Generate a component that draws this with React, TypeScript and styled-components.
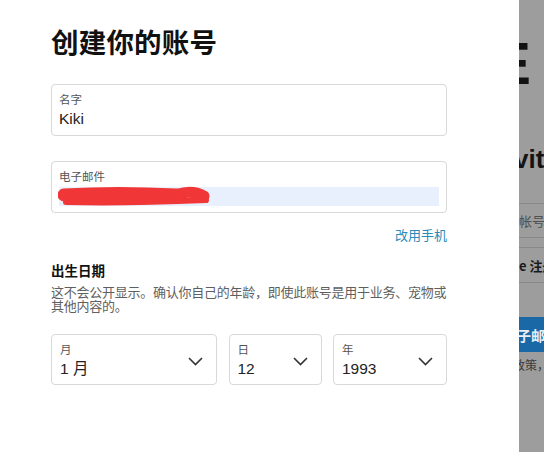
import React from "react";
import styled, { createGlobalStyle } from "styled-components";

const GlobalStyle = createGlobalStyle`
  html, body { margin: 0; padding: 0; background: #ffffff; }
  body { font-family: "Liberation Sans", "Noto Sans CJK SC", sans-serif; }
  * { box-sizing: border-box; }
`;

const Page = styled.div`
  display: flex;
  width: 544px;
  height: 452px;
  overflow: hidden;
`;

const Panel = styled.div`
  width: 519px;
  flex: none;
  background: #ffffff;
  padding: 22px 72px 0 51px;
  display: flex;
  flex-direction: column;
`;

const Title = styled.h1`
  margin: 0;
  font-family: "Noto Sans CJK SC", sans-serif;
  font-size: 27.5px;
  line-height: 38px;
  font-weight: 700;
  color: #111;
  letter-spacing: 0.2px;
`;

const Field = styled.div<{ $mt: number }>`
  margin-top: ${(p) => p.$mt}px;
  height: 52px;
  border: 1px solid #d8d8d8;
  border-radius: 4px;
  padding: 6px 7px 0 7px;
  display: flex;
  flex-direction: column;
`;

const Label = styled.div`
  font-family: "Noto Sans CJK SC", sans-serif;
  font-size: 11.5px;
  line-height: 16px;
  color: #555;
`;

const Value = styled.div`
  font-family: "Liberation Sans", "Noto Sans CJK SC", sans-serif;
  font-size: 15.5px;
  line-height: 24px;
  color: #222;
`;

const Autofill = styled.div`
  position: relative;
  margin-top: 3px;
  height: 19px;
  background: #e8f0fe;
`;

const Scribble = styled.svg`
  position: absolute;
  left: -1px;
  top: -5px;
`;

const LinkRow = styled.div`
  display: flex;
  justify-content: flex-end;
  margin-top: 12px;
`;

const Link = styled.a`
  font-family: "Noto Sans CJK SC", sans-serif;
  font-size: 13px;
  line-height: 20px;
  color: #2a8ab8;
  text-decoration: none;
`;

const SectionTitle = styled.div`
  margin-top: 15px;
  font-family: "Noto Sans CJK SC", sans-serif;
  font-size: 13.5px;
  line-height: 20px;
  font-weight: 700;
  color: #111;
`;

const Hint = styled.p`
  margin: 5px 0 0 0;
  font-family: "Noto Sans CJK SC", sans-serif;
  font-size: 13px;
  line-height: 13.5px;
  letter-spacing: -0.25px;
  color: #5f5f5f;
`;

const DateRow = styled.div`
  margin-top: 22px;
  display: flex;
  gap: 11.5px;
`;

const Select = styled.div<{ $w?: number }>`
  ${(p) => (p.$w ? `width: ${p.$w}px; flex: none;` : "flex: 1;")}
  height: 51px;
  border: 1px solid #d8d8d8;
  border-radius: 4px;
  padding: 6px 13px 0 8px;
  display: flex;
  align-items: center;
`;

const SelectText = styled.div`
  flex: 1;
  align-self: flex-start;
  display: flex;
  flex-direction: column;
`;

const ChevronIcon = styled.svg`
  margin-top: -2px;
  flex: none;
`;

const Chevron = () => (
  <ChevronIcon width="15" height="9" viewBox="0 0 15 9">
    <polyline points="1,1 7.5,7.5 14,1" fill="none" stroke="#333" strokeWidth="1.6" />
  </ChevronIcon>
);

/* background page behind the overlay */
const Backdrop = styled.div`
  flex: 1;
  background: #9d9d9d;
  overflow: hidden;
  display: flex;
  flex-direction: column;
  white-space: nowrap;
`;

const BigLetter = styled.div`
  margin: 34px 0 0 -28px;
  font-family: "Liberation Sans", sans-serif;
  font-weight: 900;
  font-size: 60px;
  line-height: 60px;
  color: #121212;
`;

const BigWord = styled.div`
  margin: 50px 0 0 -5px;
  font-family: "Liberation Sans", sans-serif;
  font-weight: 700;
  font-size: 26px;
  line-height: 30px;
  color: #141414;
`;

const Row = styled.div<{ $h: number; $bold?: boolean }>`
  height: ${(p) => p.$h}px;
  border-bottom: 1px solid #888;
  display: flex;
  align-items: center;
  font-family: "Noto Sans CJK SC", sans-serif;
  font-size: 13px;
  color: ${(p) => (p.$bold ? "#1a1a1a" : "#505050")};
  font-weight: ${(p) => (p.$bold ? 700 : 400)};
`;

const Rows = styled.div`
  margin-top: 29px;
  border-top: 1px solid #888;
  display: flex;
  flex-direction: column;
`;

const BlueButton = styled.div`
  margin-top: 34px;
  height: 35px;
  background: #1a68a6;
  color: #e8eef5;
  font-family: "Noto Sans CJK SC", sans-serif;
  font-weight: 700;
  font-size: 14px;
  display: flex;
  align-items: center;
  margin-left: -2px;
`;

const SmallNote = styled.div`
  margin: 4px 0 0 -6px;
  font-family: "Noto Sans CJK SC", sans-serif;
  font-size: 12px;
  color: #3a3a3a;
`;

export default function App() {
  return (
    <>
      <GlobalStyle />
      <Page>
        <Panel>
          <Title>创建你的账号</Title>
          <Field $mt={24}>
            <Label>名字</Label>
            <Value>Kiki</Value>
          </Field>
          <Field $mt={25}>
            <Label>电子邮件</Label>
            <Autofill>
              <Scribble width="160" height="28" viewBox="0 0 160 28">
                <path d="M6 13 C40 11, 80 11, 118 13" stroke="#f03636" strokeWidth="13" fill="none" strokeLinecap="round" />
                <path d="M110 15 C125 10, 135 8, 146 14" stroke="#f03636" strokeWidth="11" fill="none" strokeLinecap="round" />
                <path d="M8 20 C50 21, 100 20, 148 18" stroke="#f03636" strokeWidth="6" fill="none" strokeLinecap="round" />
              </Scribble>
            </Autofill>
          </Field>
          <LinkRow>
            <Link href="#">改用手机</Link>
          </LinkRow>
          <SectionTitle>出生日期</SectionTitle>
          <Hint>这不会公开显示。确认你自己的年龄，即使此账号是用于业务、宠物或其他内容的。</Hint>
          <DateRow>
            <Select $w={166}>
              <SelectText>
                <Label>月</Label>
                <Value>1 月</Value>
              </SelectText>
              <Chevron />
            </Select>
            <Select $w={93}>
              <SelectText>
                <Label>日</Label>
                <Value>12</Value>
              </SelectText>
              <Chevron />
            </Select>
            <Select>
              <SelectText>
                <Label>年</Label>
                <Value>1993</Value>
              </SelectText>
              <Chevron />
            </Select>
          </DateRow>
        </Panel>
        <Backdrop>
          <BigLetter>E</BigLetter>
          <BigWord>vit</BigWord>
          <Rows>
            <Row $h={34}>帐号</Row>
            <Row $h={10}></Row>
            <Row $h={35} $bold>e 注册</Row>
          </Rows>
          <BlueButton>子邮件</BlueButton>
          <SmallNote>政策，</SmallNote>
        </Backdrop>
      </Page>
    </>
  );
}
